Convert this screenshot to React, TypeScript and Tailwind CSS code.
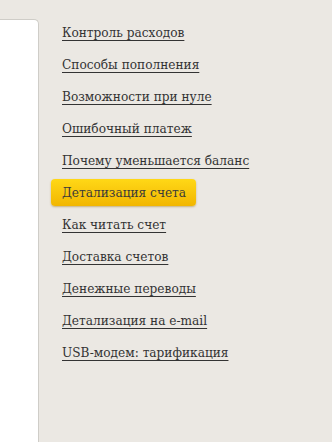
import React from "react";

const links = [
  "Контроль расходов",
  "Способы пополнения",
  "Возможности при нуле",
  "Ошибочный платеж",
  "Почему уменьшается баланс",
  "Детализация счета",
  "Как читать счет",
  "Доставка счетов",
  "Денежные переводы",
  "Детализация на e-mail",
  "USB-модем: тарификация",
];

export default function App() {
  return (
    <div
      className="w-[332px] h-[442px] bg-[#ebe8e3] flex overflow-hidden"
      style={{ fontFamily: '"DejaVu Serif Condensed", "DejaVu Serif", serif' }}
    >
      <div className="w-[39px] shrink-0 pt-[19px]">
        <div className="h-full bg-white border-r border-t border-[#cfcdc8] rounded-tr-[5px]" />
      </div>
      <ul className="flex flex-col pt-[22px] pl-[23px] gap-[12px] [font-stretch:condensed]">
        {links.map((l) =>
          l === "Детализация счета" ? (
            <li key={l} className="h-[20px] flex items-center">
              <span className="-ml-[11px] pl-[11px] h-[27px] w-[145px] shrink-0 whitespace-nowrap flex items-center rounded-[4px] bg-gradient-to-b from-[#ffd816] to-[#f2b600] shadow-[0_1px_2px_rgba(150,110,0,0.45)] text-[13.5px] text-[#3a3a3a]">
                {l}
              </span>
            </li>
          ) : (
            <li key={l} className="h-[20px] flex items-center whitespace-nowrap">
              <a className="text-[13.5px] text-[#333] underline underline-offset-[3px] decoration-[1px] cursor-pointer">
                {l}
              </a>
            </li>
          )
        )}
      </ul>
    </div>
  );
}
